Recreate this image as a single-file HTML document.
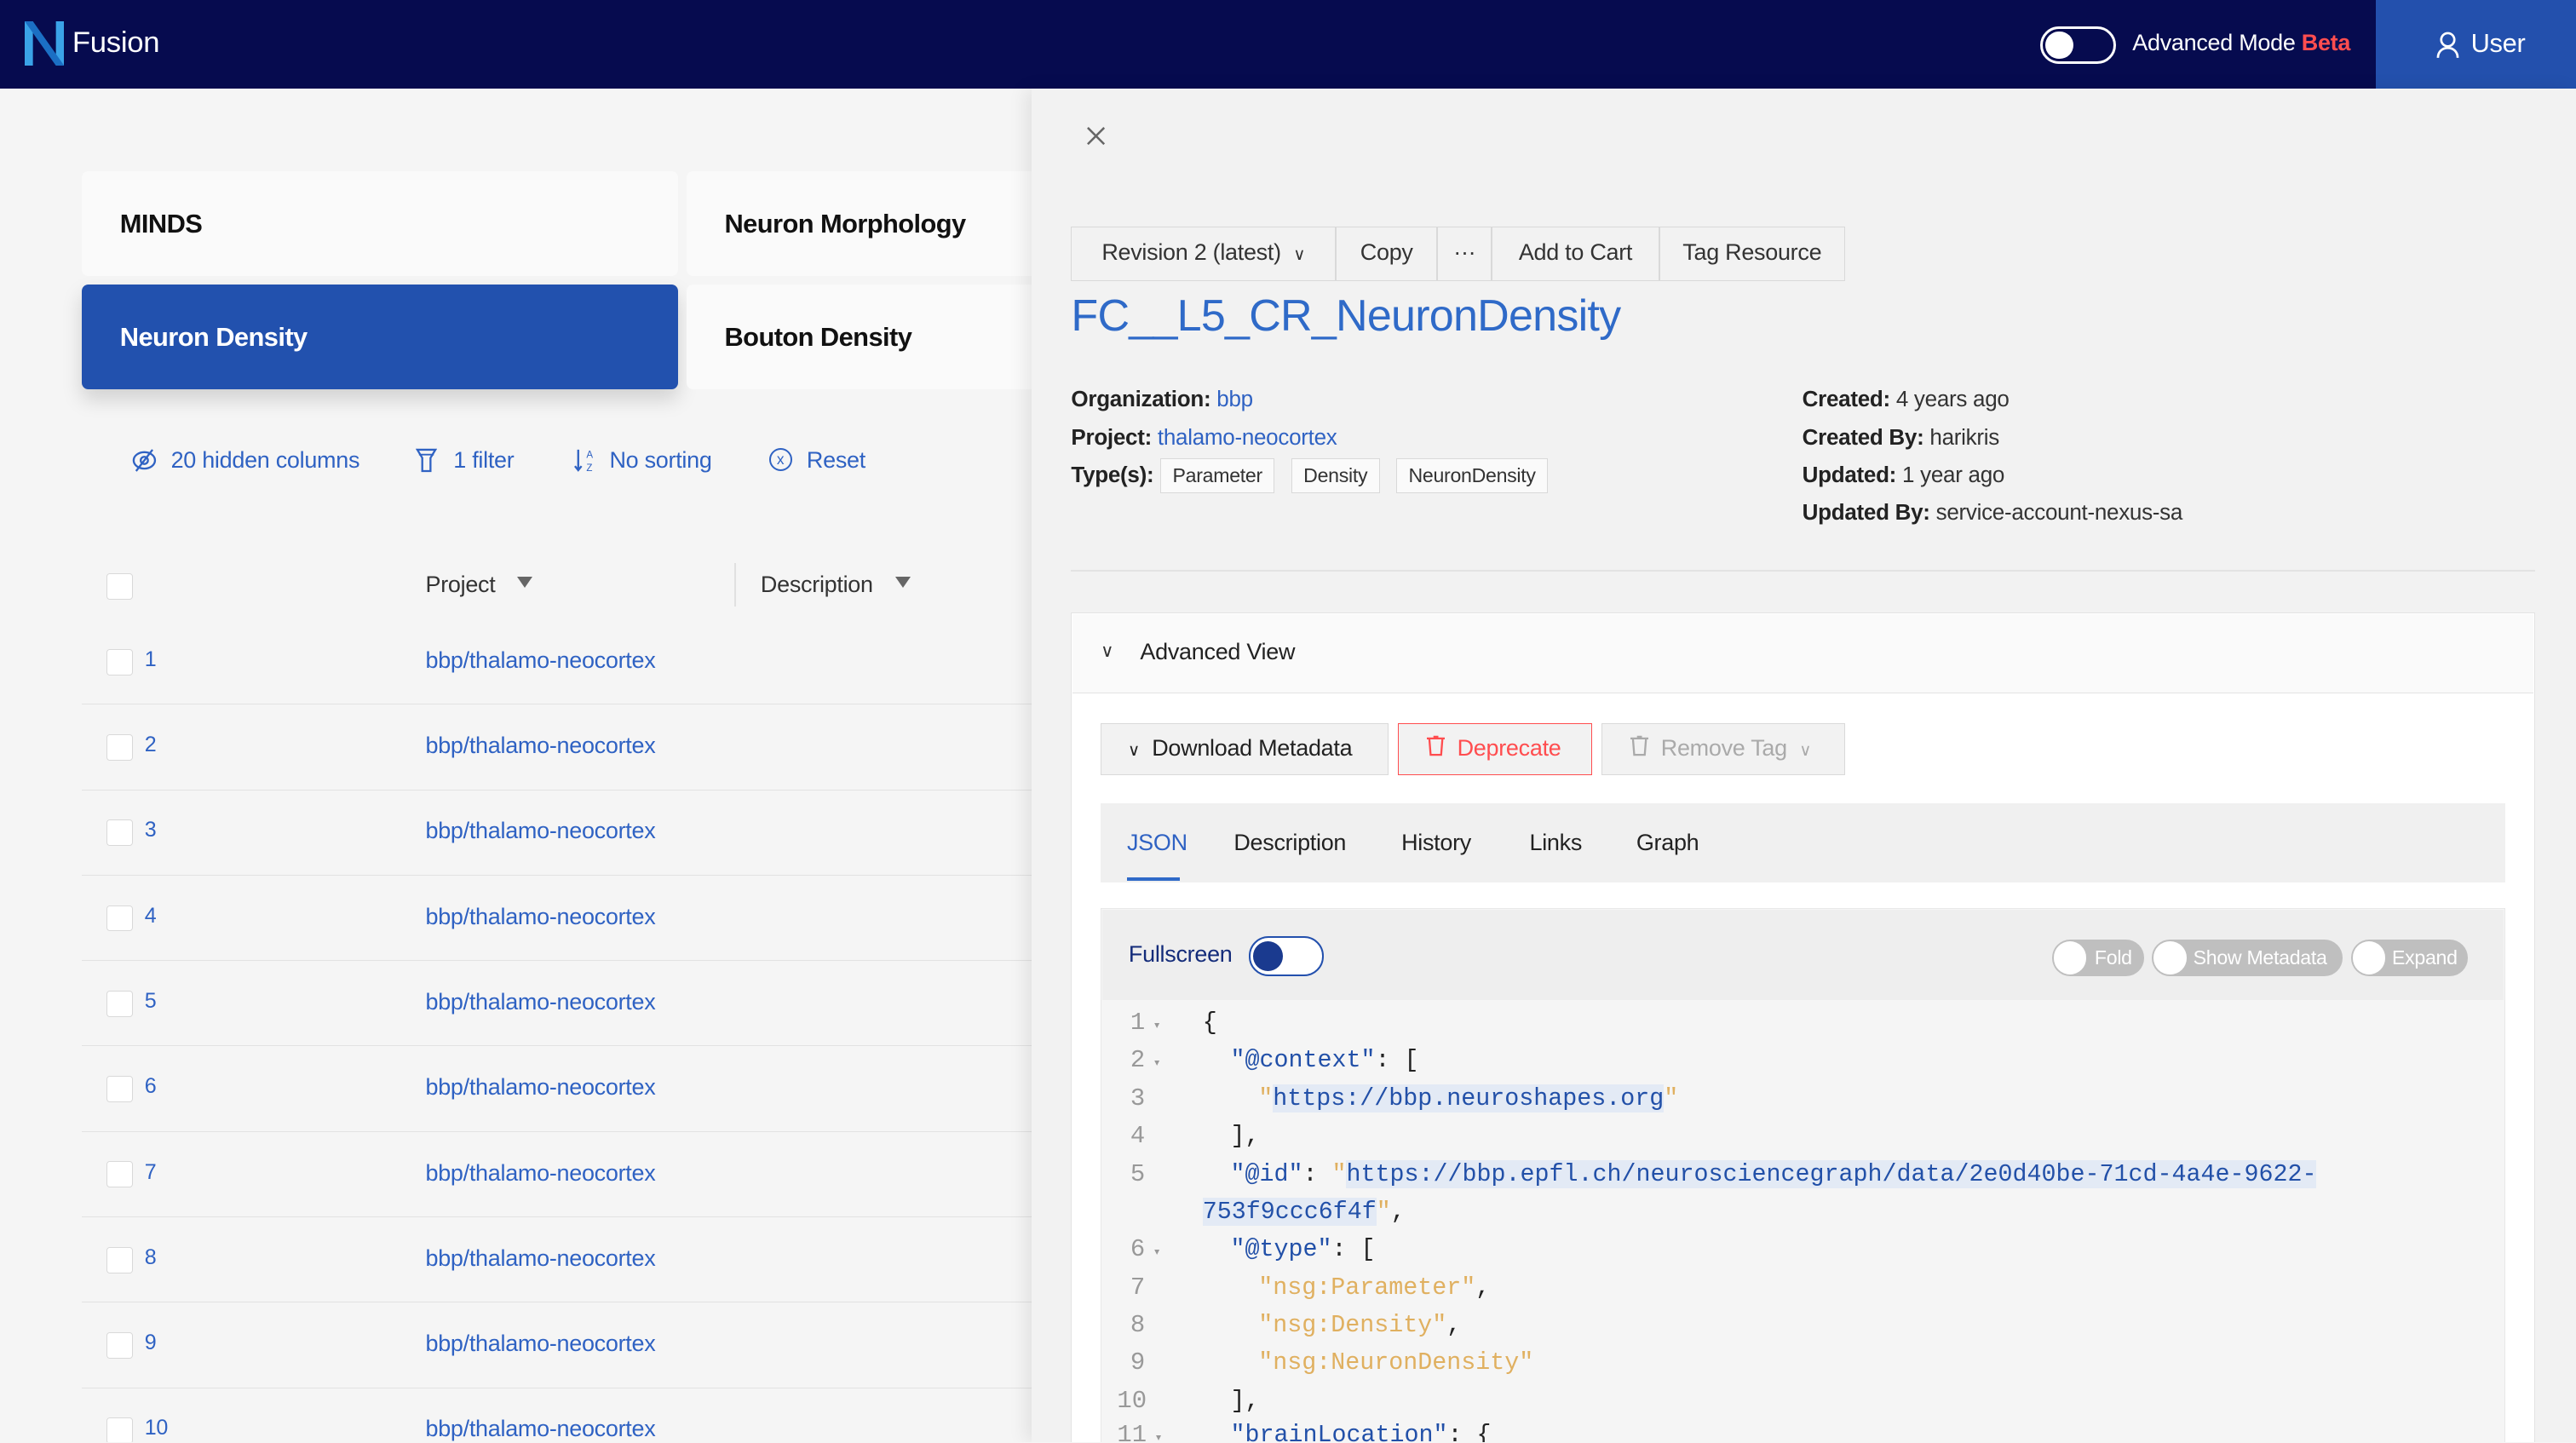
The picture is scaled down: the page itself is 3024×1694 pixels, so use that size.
<!DOCTYPE html>
<html><head><meta charset="utf-8"><style>
*{box-sizing:border-box;margin:0;padding:0}
html,body{width:3024px;height:1694px;overflow:hidden}
body{background:#f5f5f5;font-family:"Liberation Sans",sans-serif}
#r{zoom:1.92857;width:1568px;height:878px;position:relative;overflow:hidden;background:#f5f5f5;letter-spacing:-0.15px}
.a{position:absolute;white-space:nowrap}
.hdr{left:0;top:0;width:1568px;height:54px;background:#060b4f}
.card{position:absolute;background:#fafafa;border-radius:4px;font-weight:bold;font-size:16px;color:#111;padding-left:23px;line-height:64px;letter-spacing:-0.3px}
.tb{color:#2f62c3;font-size:14px}
.row{position:absolute;left:50px;width:580px;height:52px;border-bottom:1px solid #e2e2e2}
.cb{position:absolute;left:15px;width:16px;height:16px;border:1px solid #d9d9d9;background:#fff;border-radius:2px}
.lnk{color:#2f62c3;font-size:14px}
.btn{position:absolute;top:138px;height:33px;border:1px solid #d9d9d9;background:#f2f2f2;font-size:14px;color:#333;line-height:31px;text-align:center}
.meta{font-size:13.5px;color:#333}
.meta b{color:#222}
.tag{display:inline-block;border:1px solid #d9d9d9;background:#fafafa;font-size:12px;padding:0 7px;line-height:20px;margin-left:4px}
.code{font-family:"Liberation Mono",monospace;font-size:14.7px;color:#222;letter-spacing:0}
.ln{color:#999;font-family:"Liberation Mono",monospace;font-size:15px;letter-spacing:0}
.s{color:#e0b060}.k{color:#2250a8}.u{color:#2250a8;background:#e3eaf5}
.pill{position:absolute;top:572px;height:22px;border-radius:11px;background:#bfbfbf;color:#fff;font-size:12px;line-height:22px}
.pill i{position:absolute;left:1px;top:1px;width:20px;height:20px;border-radius:10px;background:#fff}
</style></head><body><div id="r">
<div class="a hdr"></div>
<svg class="a" style="left:15px;top:13px" width="24" height="27" viewBox="0 0 24 27"><path d="M0 0h5v27H0z" fill="#3aa3e8"/><path d="M19 0h5v27h-5z" fill="#3aa3e8"/><path d="M0 0h5l19 27h-5z" fill="#1b6fc4"/></svg>
<div class="a" style="left:44px;top:16px;color:#fff;font-size:18px">Fusion</div>
<div class="a" style="left:1242px;top:16px;width:46px;height:23px;border:2px solid #fff;border-radius:12px"></div>
<div class="a" style="left:1245px;top:19px;width:17px;height:17px;border-radius:9px;background:#fff"></div>
<div class="a" style="left:1298px;top:18px;color:#fff;font-size:14px">Advanced Mode <span style="color:#ff4d4f;font-weight:bold">Beta</span></div>
<div class="a" style="left:1446px;top:0;width:122px;height:54px;background:#2350ad"></div>
<svg class="a" style="left:1483px;top:19px" width="14" height="17" viewBox="0 0 14 17"><circle cx="7" cy="5" r="4" fill="none" stroke="#fff" stroke-width="1.4"/><path d="M1 16c0-4 3-6 6-6s6 2 6 6" fill="none" stroke="#fff" stroke-width="1.4"/></svg>
<div class="a" style="left:1504px;top:17px;color:#fff;font-size:16px">User</div>

<div class="card" style="left:50px;top:104px;width:363px;height:64px">MINDS</div>
<div class="card" style="left:418px;top:104px;width:220px;height:64px">Neuron Morphology</div>
<div class="card" style="left:50px;top:173px;width:363px;height:64px;background:#2251ae;color:#fff;box-shadow:0 6px 12px rgba(0,0,0,.15)">Neuron Density</div>
<div class="card" style="left:418px;top:173px;width:220px;height:64px">Bouton Density</div>

<svg class="a" style="left:80px;top:273px" width="16" height="15" viewBox="0 0 16 15"><ellipse cx="8" cy="7.5" rx="6.5" ry="5" fill="none" stroke="#2f62c3" stroke-width="1.2"/><circle cx="8" cy="7.5" r="2.2" fill="none" stroke="#2f62c3" stroke-width="1.2"/><path d="M3 14L13 1" stroke="#2f62c3" stroke-width="1.2"/></svg>
<div class="a tb" style="left:104px;top:272px">20 hidden columns</div>
<svg class="a" style="left:253px;top:273px" width="13" height="15" viewBox="0 0 13 15"><path d="M1 1h11l-3 5v8H4V6z" fill="none" stroke="#2f62c3" stroke-width="1.2"/><path d="M2 4h9" stroke="#2f62c3"/></svg>
<div class="a tb" style="left:276px;top:272px">1 filter</div>
<svg class="a" style="left:349px;top:273px" width="14" height="15" viewBox="0 0 14 15"><path d="M3 1v12M1 11l2 2.5L5 11" fill="none" stroke="#2f62c3" stroke-width="1.2"/><text x="8" y="6" font-size="6" fill="#2f62c3" font-family="Liberation Sans">A</text><text x="8" y="14" font-size="6" fill="#2f62c3" font-family="Liberation Sans">Z</text></svg>
<div class="a tb" style="left:371px;top:272px">No sorting</div>
<div class="a" style="left:468px;top:273px;width:14px;height:14px;border:1.2px solid #2f62c3;border-radius:7px;color:#2f62c3;font-size:9px;text-align:center;line-height:12px">x</div>
<div class="a tb" style="left:491px;top:272px">Reset</div>

<div class="a cb" style="left:65px;top:349px"></div>
<div class="a" style="left:259px;top:348px;font-size:14px;color:#333">Project</div>
<div class="a" style="left:315px;top:351px;border:5px solid transparent;border-top:7px solid #666"></div>
<div class="a" style="left:447px;top:343px;width:1px;height:26px;background:#e0e0e0"></div>
<div class="a" style="left:463px;top:348px;font-size:14px;color:#333">Description</div>
<div class="a" style="left:545px;top:351px;border:5px solid transparent;border-top:7px solid #666"></div>

<div class="row" style="top:377px"><div class="cb" style="top:18px"></div><div class="a lnk" style="left:38px;top:17px;font-size:13px">1</div><div class="a lnk" style="left:209px;top:17px">bbp/thalamo-neocortex</div></div>
<div class="row" style="top:429px"><div class="cb" style="top:18px"></div><div class="a lnk" style="left:38px;top:17px;font-size:13px">2</div><div class="a lnk" style="left:209px;top:17px">bbp/thalamo-neocortex</div></div>
<div class="row" style="top:481px"><div class="cb" style="top:18px"></div><div class="a lnk" style="left:38px;top:17px;font-size:13px">3</div><div class="a lnk" style="left:209px;top:17px">bbp/thalamo-neocortex</div></div>
<div class="row" style="top:533px"><div class="cb" style="top:18px"></div><div class="a lnk" style="left:38px;top:17px;font-size:13px">4</div><div class="a lnk" style="left:209px;top:17px">bbp/thalamo-neocortex</div></div>
<div class="row" style="top:585px"><div class="cb" style="top:18px"></div><div class="a lnk" style="left:38px;top:17px;font-size:13px">5</div><div class="a lnk" style="left:209px;top:17px">bbp/thalamo-neocortex</div></div>
<div class="row" style="top:637px"><div class="cb" style="top:18px"></div><div class="a lnk" style="left:38px;top:17px;font-size:13px">6</div><div class="a lnk" style="left:209px;top:17px">bbp/thalamo-neocortex</div></div>
<div class="row" style="top:689px"><div class="cb" style="top:18px"></div><div class="a lnk" style="left:38px;top:17px;font-size:13px">7</div><div class="a lnk" style="left:209px;top:17px">bbp/thalamo-neocortex</div></div>
<div class="row" style="top:741px"><div class="cb" style="top:18px"></div><div class="a lnk" style="left:38px;top:17px;font-size:13px">8</div><div class="a lnk" style="left:209px;top:17px">bbp/thalamo-neocortex</div></div>
<div class="row" style="top:793px"><div class="cb" style="top:18px"></div><div class="a lnk" style="left:38px;top:17px;font-size:13px">9</div><div class="a lnk" style="left:209px;top:17px">bbp/thalamo-neocortex</div></div>
<div class="row" style="top:845px"><div class="cb" style="top:18px"></div><div class="a lnk" style="left:38px;top:17px;font-size:13px">10</div><div class="a lnk" style="left:209px;top:17px">bbp/thalamo-neocortex</div></div>

<div class="a" style="left:628px;top:54px;width:940px;height:824px;background:#f2f2f2;box-shadow:-4px 0 10px rgba(0,0,0,.08)"></div>
<svg class="a" style="left:661px;top:77px" width="12" height="12" viewBox="0 0 12 12"><path d="M1 1l10 10M11 1L1 11" stroke="#666" stroke-width="1.3"/></svg>
<div class="btn" style="left:652px;width:161px">Revision 2 (latest) &nbsp;<span style="font-size:10px">∨</span></div>
<div class="btn" style="left:813px;width:62px">Copy</div>
<div class="btn" style="left:875px;width:33px">···</div>
<div class="btn" style="left:908px;width:102px">Add to Cart</div>
<div class="btn" style="left:1010px;width:113px">Tag Resource</div>
<div class="a" style="left:652px;top:177px;font-size:27px;color:#2f6ac8;letter-spacing:-0.4px">FC__L5_CR_NeuronDensity</div>
<div class="a meta" style="left:652px;top:235px"><b>Organization:</b> <span style="color:#2f62c3">bbp</span></div>
<div class="a meta" style="left:652px;top:258px"><b>Project:</b> <span style="color:#2f62c3">thalamo-neocortex</span></div>
<div class="a meta" style="left:652px;top:279px"><b>Type(s):</b><span class="tag">Parameter</span><span class="tag" style="margin-left:10px">Density</span><span class="tag" style="margin-left:10px">NeuronDensity</span></div>
<div class="a meta" style="left:1097px;top:235px"><b>Created:</b> 4 years ago</div>
<div class="a meta" style="left:1097px;top:258px"><b>Created By:</b> harikris</div>
<div class="a meta" style="left:1097px;top:281px"><b>Updated:</b> 1 year ago</div>
<div class="a meta" style="left:1097px;top:304px"><b>Updated By:</b> service-account-nexus-sa</div>
<div class="a" style="left:652px;top:347px;width:891px;height:1px;background:#e3e3e3"></div>

<div class="a" style="left:652px;top:373px;width:891px;height:520px;background:#fff;border:1px solid #e3e3e3"></div>
<div class="a" style="left:653px;top:374px;width:889px;height:48px;background:#fafafa;border-bottom:1px solid #e3e3e3"></div>
<div class="a" style="left:670px;top:390px;font-size:11px;color:#333">∨</div>
<div class="a" style="left:694px;top:389px;font-size:14px;color:#222">Advanced View</div>
<div class="a" style="left:670px;top:440px;width:175px;height:32px;border:1px solid #d9d9d9;background:#f2f2f2;font-size:14px;color:#222;line-height:30px;padding-left:16px"><span style="font-size:10px">∨</span>&nbsp; Download Metadata</div>
<div class="a" style="left:851px;top:440px;width:118px;height:32px;border:1px solid #ff4d4f;background:#f2f2f2;font-size:14px;color:#ff4d4f;line-height:30px;padding-left:17px"><svg width="11" height="13" viewBox="0 0 11 13" style="vertical-align:-1px"><path d="M0 2h11M4 1h3M1.5 2l.8 10h6.4l.8-10" fill="none" stroke="#ff4d4f" stroke-width="1.2"/></svg>&nbsp; Deprecate</div>
<div class="a" style="left:975px;top:440px;width:148px;height:32px;border:1px solid #d9d9d9;background:#f2f2f2;font-size:14px;color:#aaa;line-height:30px;padding-left:17px"><svg width="11" height="13" viewBox="0 0 11 13" style="vertical-align:-1px"><path d="M0 2h11M4 1h3M1.5 2l.8 10h6.4l.8-10" fill="none" stroke="#aaa" stroke-width="1.2"/></svg>&nbsp; Remove Tag &nbsp;<span style="font-size:10px">∨</span></div>

<div class="a" style="left:670px;top:489px;width:855px;height:48px;background:#f0f0f0"></div>
<div class="a" style="left:686px;top:505px;font-size:14px;color:#2f62c3">JSON</div>
<div class="a" style="left:686px;top:534px;width:32px;height:2px;background:#2f6ac8"></div>
<div class="a" style="left:751px;top:505px;font-size:14px;color:#222">Description</div>
<div class="a" style="left:853px;top:505px;font-size:14px;color:#222">History</div>
<div class="a" style="left:931px;top:505px;font-size:14px;color:#222">Links</div>
<div class="a" style="left:996px;top:505px;font-size:14px;color:#222">Graph</div>

<div class="a" style="left:670px;top:553px;width:855px;height:330px;background:#f5f5f5;border:1px solid #e8e8e8"></div>
<div class="a" style="left:671px;top:554px;width:853px;height:55px;background:#eeeeee"></div>
<div class="a" style="left:687px;top:573px;font-size:14px;color:#142c7a">Fullscreen</div>
<div class="a" style="left:760px;top:570px;width:46px;height:24px;border:1.5px solid #2350ad;border-radius:12px;background:#fff"></div>
<div class="a" style="left:763px;top:573px;width:18px;height:18px;border-radius:9px;background:#1a3a8f"></div>
<div class="pill" style="left:1249px;width:56px"><i></i><span style="margin-left:26px">Fold</span></div>
<div class="pill" style="left:1310px;width:116px"><i></i><span style="margin-left:25px">Show Metadata</span></div>
<div class="pill" style="left:1431px;width:71px"><i></i><span style="margin-left:25px">Expand</span></div>

<div class="a ln" style="left:688px;top:614px">1<span style="font-size:8px"> ▾</span></div><div class="a code" style="left:732px;top:614px">{</div>
<div class="a ln" style="left:688px;top:637px">2<span style="font-size:8px"> ▾</span></div><div class="a code" style="left:749px;top:637px"><span class="k">"@context"</span>: [</div>
<div class="a ln" style="left:688px;top:660px">3</div><div class="a code" style="left:766px;top:660px"><span class="s">"</span><span class="u">https://bbp.neuroshapes.org</span><span class="s">"</span></div>
<div class="a ln" style="left:688px;top:683px">4</div><div class="a code" style="left:749px;top:683px">],</div>
<div class="a ln" style="left:688px;top:706px">5</div><div class="a code" style="left:749px;top:706px"><span class="k">"@id"</span>: <span class="s">"</span><span class="u">https://bbp.epfl.ch/neurosciencegraph/data/2e0d40be-71cd-4a4e-9622-</span></div>
<div class="a code" style="left:732px;top:729px"><span class="u">753f9ccc6f4f</span><span class="s">"</span>,</div>
<div class="a ln" style="left:688px;top:752px">6<span style="font-size:8px"> ▾</span></div><div class="a code" style="left:749px;top:752px"><span class="k">"@type"</span>: [</div>
<div class="a ln" style="left:688px;top:775px">7</div><div class="a code" style="left:766px;top:775px"><span class="s">"nsg:Parameter"</span>,</div>
<div class="a ln" style="left:688px;top:798px">8</div><div class="a code" style="left:766px;top:798px"><span class="s">"nsg:Density"</span>,</div>
<div class="a ln" style="left:688px;top:821px">9</div><div class="a code" style="left:766px;top:821px"><span class="s">"nsg:NeuronDensity"</span></div>
<div class="a ln" style="left:680px;top:844px">10</div><div class="a code" style="left:749px;top:844px">],</div>
<div class="a ln" style="left:680px;top:865px">11<span style="font-size:8px"> ▾</span></div><div class="a code" style="left:749px;top:865px"><span class="k">"brainLocation"</span>: {</div>
</div></body></html>
